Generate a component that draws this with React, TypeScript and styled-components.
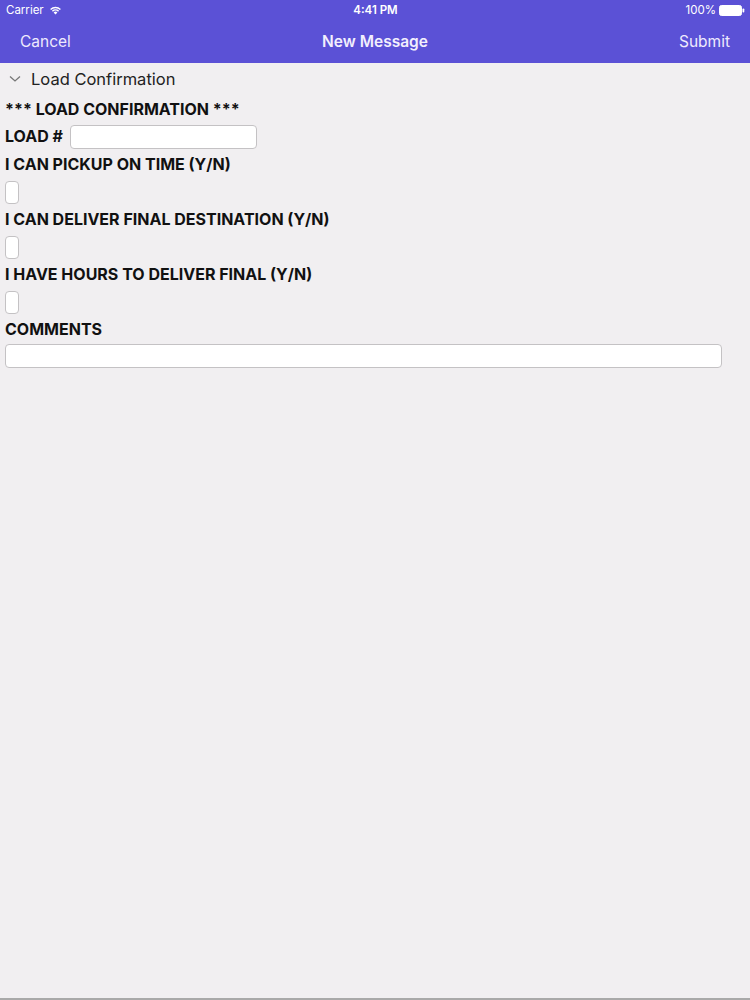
import React from "react";
import styled, { createGlobalStyle } from "styled-components";

const Global = createGlobalStyle`
  html, body { margin: 0; padding: 0; background: #f1eff1; }
  body { font-family: Inter, "Noto Sans", sans-serif; -webkit-font-smoothing: antialiased; }
  * { box-sizing: border-box; }
`;

const Page = styled.div`
  width: 750px;
  height: 1000px;
  display: flex;
  flex-direction: column;
  background: #f1eff1;
  border-bottom: 2px solid #a9a9a9;
`;

const Header = styled.header`
  background: #5b51d6;
  color: #ffffff;
  height: 63px;
  display: flex;
  flex-direction: column;
`;

const StatusBar = styled.div`
  height: 20px;
  display: grid;
  grid-template-columns: 1fr auto 1fr;
  align-items: center;
  padding: 0 5px 0 6px;
  font-size: 11.5px;
`;

const StatusLeft = styled.div`
  display: flex;
  align-items: center;
  gap: 5px;
`;

const StatusCenter = styled.div`
  font-weight: 600;
`;

const StatusRight = styled.div`
  display: flex;
  align-items: center;
  justify-content: flex-end;
  gap: 3px;
`;

const NavBar = styled.div`
  flex: 1;
  display: grid;
  grid-template-columns: 1fr auto 1fr;
  align-items: center;
  padding: 0 20px 1px 20px;
  font-size: 15.5px;
`;

const NavButton = styled.span<{ $align: "left" | "right" }>`
  text-align: ${(p) => p.$align};
  color: #eeeafd;
`;

const NavTitle = styled.span`
  font-weight: 600;
  color: #f2effd;
`;

const Content = styled.main`
  padding: 0 5px;
  display: flex;
  flex-direction: column;
`;

const SectionHeader = styled.div`
  height: 32px;
  display: flex;
  align-items: center;
  gap: 10px;
  padding-left: 4px;
  font-size: 16.5px;
  color: #222;
`;

const Title = styled.div`
  font-weight: 700;
  font-size: 16px;
  color: #111;
  height: 27px;
  line-height: 28px;
`;

const Row = styled.div`
  display: flex;
  align-items: center;
  gap: 7px;
  height: 28px;
`;

const Label = styled.div`
  font-weight: 700;
  font-size: 16px;
  color: #111;
  height: 28px;
  display: flex;
  align-items: center;
`;

const TextInput = styled.div<{ $w: string }>`
  width: ${(p) => p.$w};
  height: 24px;
  background: #fff;
  border: 1px solid #c4c2c4;
  border-radius: 4px;
  margin-top: 1px;
`;

const SmallBox = styled.div`
  width: 14px;
  height: 23px;
  background: #fff;
  border: 1px solid #c4c2c4;
  border-radius: 4px;
  margin: 3px 0 1px;
`;

const Wifi = () => (
  <svg width="13" height="10" viewBox="0 0 13 10">
    <path d="M6.5 9.5 L4.6 7.4 A2.8 2.8 0 0 1 8.4 7.4 Z" fill="#fff" />
    <path d="M2.9 5.7 A5.2 5.2 0 0 1 10.1 5.7 L9.1 6.7 A3.8 3.8 0 0 0 3.9 6.7 Z" fill="#fff" />
    <path d="M1.1 3.9 A7.8 7.8 0 0 1 11.9 3.9 L10.9 4.9 A6.4 6.4 0 0 0 2.1 4.9 Z" fill="#fff" />
  </svg>
);

const Battery = () => (
  <svg width="26" height="11" viewBox="0 0 26 11">
    <rect x="0.5" y="0.5" width="22" height="10" rx="2" fill="#fff" stroke="#fff" />
    <rect x="23.5" y="3.5" width="1.8" height="4" rx="0.8" fill="#fff" />
  </svg>
);

const Chevron = () => (
  <svg width="12" height="8" viewBox="0 0 12 8">
    <path d="M1 1.5 L6 6 L11 1.5" fill="none" stroke="#777" strokeWidth="1.3" />
  </svg>
);

const questions = [
  "I CAN PICKUP ON TIME (Y/N)",
  "I CAN DELIVER FINAL DESTINATION (Y/N)",
  "I HAVE HOURS TO DELIVER FINAL (Y/N)",
];

export default function App() {
  return (
    <Page>
      <Global />
      <Header>
        <StatusBar>
          <StatusLeft>
            <span>Carrier</span>
            <Wifi />
          </StatusLeft>
          <StatusCenter>4:41 PM</StatusCenter>
          <StatusRight>
            <span>100%</span>
            <Battery />
          </StatusRight>
        </StatusBar>
        <NavBar>
          <NavButton $align="left">Cancel</NavButton>
          <NavTitle>New Message</NavTitle>
          <NavButton $align="right">Submit</NavButton>
        </NavBar>
      </Header>
      <Content>
        <SectionHeader>
          <Chevron />
          <span>Load Confirmation</span>
        </SectionHeader>
        <Title>*** LOAD CONFIRMATION ***</Title>
        <Row>
          <Label>LOAD #</Label>
          <TextInput $w="187px" />
        </Row>
        {questions.map((q) => (
          <React.Fragment key={q}>
            <Label>{q}</Label>
            <SmallBox />
          </React.Fragment>
        ))}
        <Label>COMMENTS</Label>
        <TextInput $w="717px" />
      </Content>
    </Page>
  );
}
